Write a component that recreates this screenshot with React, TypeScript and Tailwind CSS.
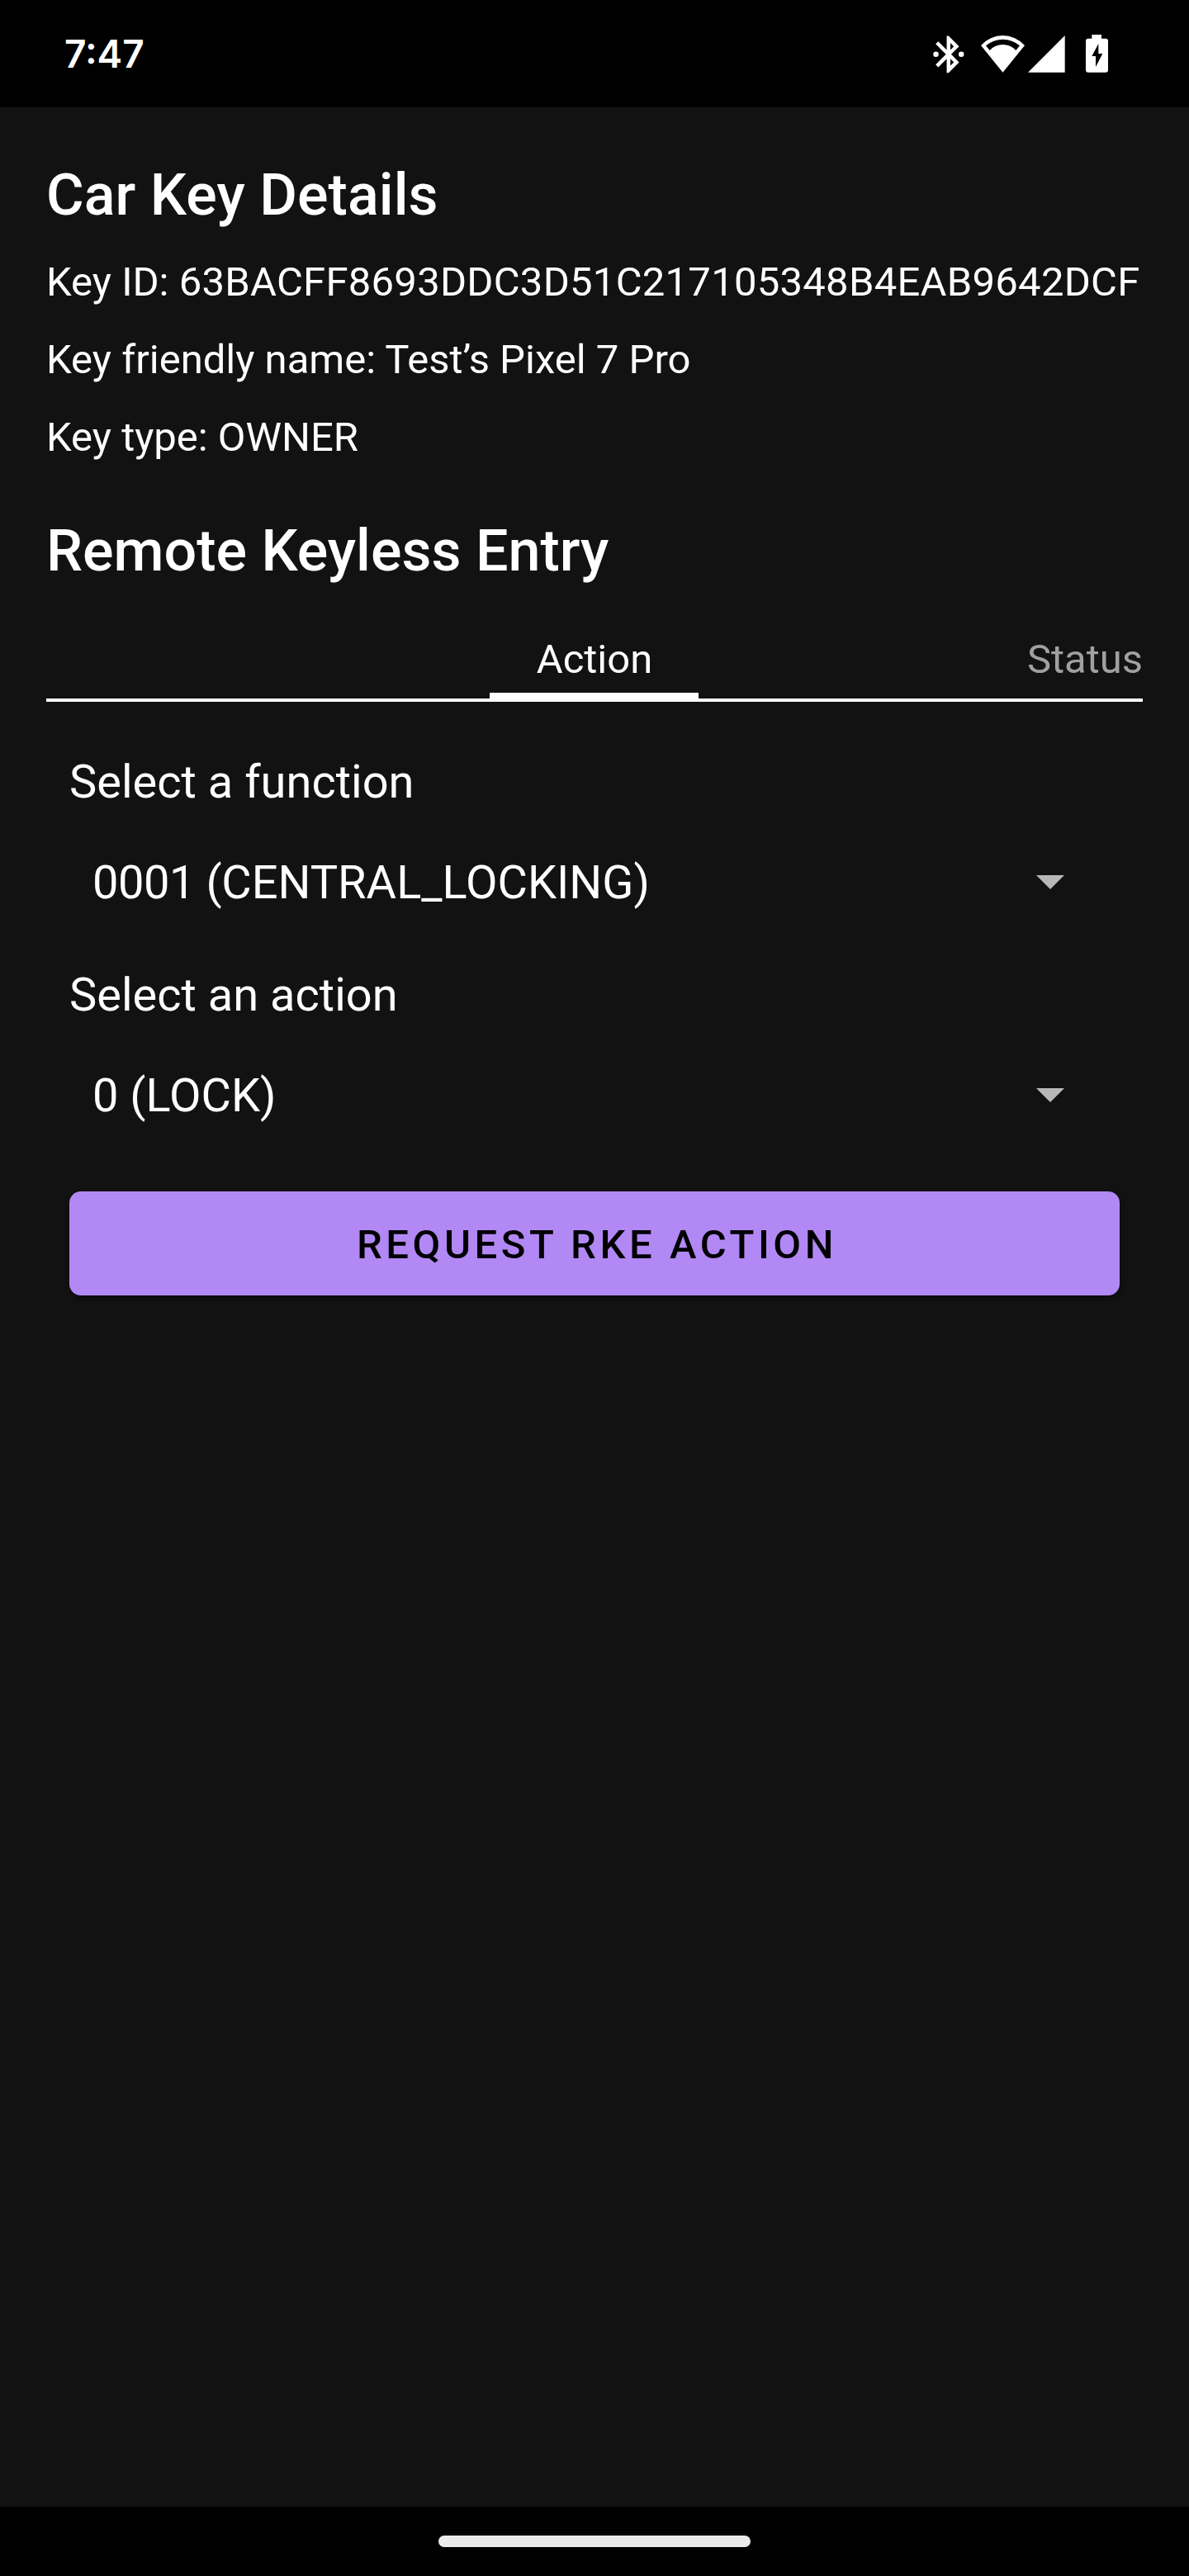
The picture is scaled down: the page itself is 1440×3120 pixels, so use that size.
import React from "react";

function BluetoothIcon() {
  return (
    <svg className="h-[53.6px] w-[53.6px]" viewBox="0 0 24 24" fill="white">
      <path d="M17.71 7.71L12 2h-1v7.59L6.41 5 5 6.41 10.59 12 5 17.59 6.41 19 11 14.41V22h1l5.71-5.71-4.3-4.29 4.3-4.29zM13 5.83l1.88 1.88L13 9.59V5.83zm1.88 10.46L13 18.17v-3.76l1.88 1.88z" />
      <circle cx="5.15" cy="12" r="1.45" />
      <circle cx="18.9" cy="12" r="1.45" />
    </svg>
  );
}

function WifiIcon() {
  return (
    <svg className="h-[45px] w-[53px]" viewBox="0 0 159 135" fill="white">
      <path
        fillRule="evenodd"
        d="M79.5 134 L0 36 A106 106 0 0 1 159 36 Z M18 37 L32 54 A64 64 0 0 1 127 54 L141 37 A94 94 0 0 0 18 37 Z"
      />
    </svg>
  );
}

function SignalIcon() {
  return (
    <svg className="h-[45px] w-[45px]" viewBox="0 0 135 135" fill="white">
      <path d="M0 134 L134 134 L134 0 Z" />
    </svg>
  );
}

function BatteryIcon() {
  return (
    <svg className="h-[46px] w-[27px]" viewBox="0 0 81 138" fill="white">
      <path
        fillRule="evenodd"
        d="M22 0 H57 V14 H72 Q81 14 81 23 V128 Q81 137 72 137 H9 Q0 137 0 128 V23 Q0 14 9 14 H22 Z M46 33 L22 78 H36 V117 L61 69 H46 Z"
      />
    </svg>
  );
}

function StatusBar() {
  return (
    <header className="flex h-[130px] items-start justify-between bg-black pr-[98.4px] pl-[78px]">
      <span className="mt-[34.5px] font-[Inter] text-[46px] leading-[60px] font-semibold">7:47</span>
      <div className="flex items-start">
        <div className="mt-[38.9px]">
          <BluetoothIcon />
        </div>
        <div className="mt-[43px] ml-[12.3px]">
          <WifiIcon />
        </div>
        <div className="mt-[43px] ml-[4.3px]">
          <SignalIcon />
        </div>
        <div className="mt-[42px] ml-[24.3px]">
          <BatteryIcon />
        </div>
      </div>
    </header>
  );
}

function Dropdown({ label, children }: { label: string; children: React.ReactNode }) {
  return (
    <div className="flex flex-col text-[56px]">
      <label className="leading-[66px]">{label}</label>
      <div className="mt-[28px] flex h-[122px] items-center justify-between pr-[67px] pl-[28px]">
        <span className="leading-[66px] whitespace-pre">{children}</span>
        <svg className="mb-[1px] h-[17px] w-[34px]" viewBox="0 0 34 17" fill="#b8b8b8">
          <path d="M0 0 H34 L17 17 Z" />
        </svg>
      </div>
    </div>
  );
}

export default function App() {
  return (
    <div className="flex h-[3120px] w-[1440px] flex-col bg-[#121212] font-[Roboto,sans-serif] text-white">
      <StatusBar />
      <main className="flex flex-1 flex-col px-[56px] pt-[65px]">
        <h1 className="text-[70px] leading-[82px] font-medium tracking-[0.07px]">Car Key Details</h1>
        <div className="mt-[18px] text-[49px] leading-[94px] whitespace-nowrap">
          <p>
            Key ID: <span className="tracking-[0.25px]">63BACFF8693DDC3D51C217105348B4EAB9642DCF</span>
          </p>
          <p>Key friendly name: Test’s Pixel 7 Pro</p>
          <p>Key type: OWNER</p>
        </div>
        <h2 className="mt-[49px] text-[70px] leading-[82px] font-medium">Remote Keyless Entry</h2>
        <div className="mt-[42px] grid h-[100px] grid-cols-3 border-b-4 border-white text-[49px] leading-[57px]">
          <div />
          <div className="flex justify-center">
            <div className="flex h-full w-[253px] flex-col items-center justify-between border-b-[7px] border-white pt-[20px]">
              Action
            </div>
          </div>
          <div className="pt-[20px] text-right text-[#a0a0a0]">Status</div>
        </div>
        <section className="flex flex-col px-[28px] pt-[64px]">
          <div className="flex flex-col gap-[42px]">
            <Dropdown label="Select a function">
              <span className="tracking-[-0.45px]">0001 (</span>CENTRAL_LOCKING)
            </Dropdown>
            <Dropdown label="Select an action">0 (LOCK)</Dropdown>
          </div>
          <button className="mt-[55px] h-[126px] rounded-[14px] bg-[#b288f4] pt-[4px] pl-[6px] text-[49px] font-medium tracking-[4.56px] text-black shadow-[0_3px_6px_rgba(0,0,0,0.4)]">
            REQUEST RKE ACTION
          </button>
        </section>
      </main>
      <footer className="flex h-[84px] justify-center bg-black pt-[35px]">
        <div className="h-[14px] w-[378px] rounded-full bg-[#ebebeb]" />
      </footer>
    </div>
  );
}
